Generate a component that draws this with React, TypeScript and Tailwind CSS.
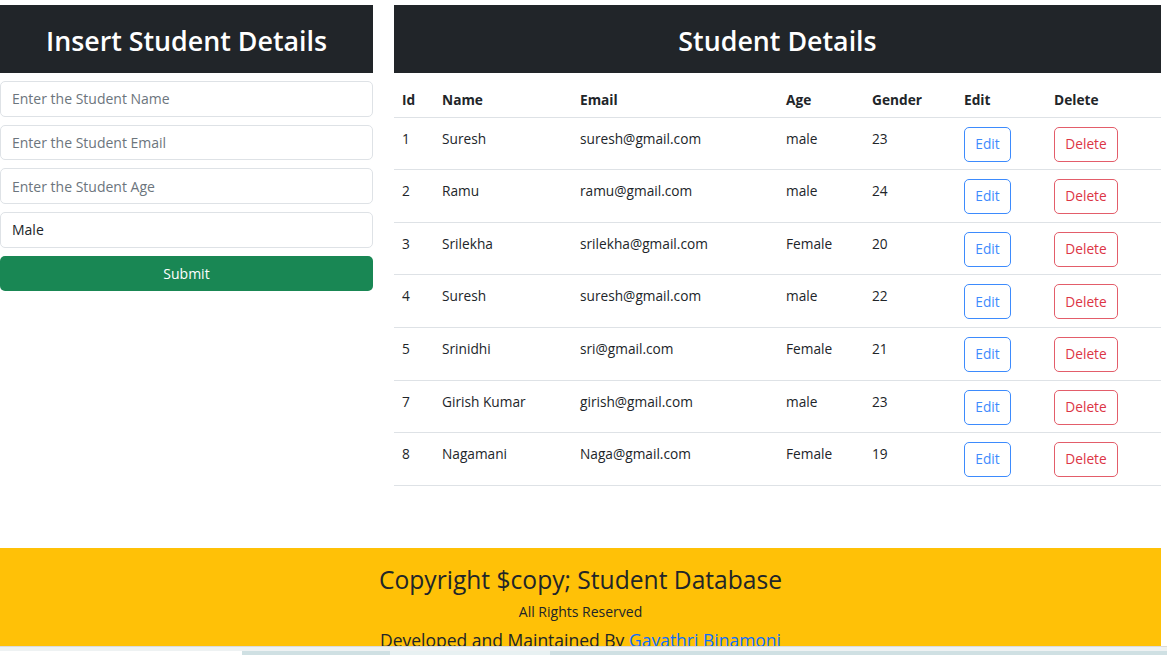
import React from "react";

type Student = {
  id: number;
  name: string;
  email: string;
  age: string;
  gender: string;
};

const students: Student[] = [
  { id: 1, name: "Suresh", email: "suresh@gmail.com", age: "male", gender: "23" },
  { id: 2, name: "Ramu", email: "ramu@gmail.com", age: "male", gender: "24" },
  { id: 3, name: "Srilekha", email: "srilekha@gmail.com", age: "Female", gender: "20" },
  { id: 4, name: "Suresh", email: "suresh@gmail.com", age: "male", gender: "22" },
  { id: 5, name: "Srinidhi", email: "sri@gmail.com", age: "Female", gender: "21" },
  { id: 7, name: "Girish Kumar", email: "girish@gmail.com", age: "male", gender: "23" },
  { id: 8, name: "Nagamani", email: "Naga@gmail.com", age: "Female", gender: "19" },
];

const Field = ({ placeholder, value }: { placeholder: string; value?: string }) => (
  <input
    readOnly
    placeholder={placeholder}
    value={value}
    className="w-full h-[35.5px] border border-[#dee2e6] rounded-[5px] px-[11px] text-[14px] text-[#212529] placeholder:text-[#6c757d] outline-none"
  />
);

const InsertForm = () => {
  return (
    <div className="w-[373px] shrink-0">
      <div className="h-[68px] bg-[#212529] flex items-center justify-center pt-[5px]">
        <h2 className="text-white text-[26.8px] font-semibold">Insert Student Details</h2>
      </div>
      <div className="mt-[8px] flex flex-col gap-[8.2px]">
        <Field placeholder="Enter the Student Name" />
        <Field placeholder="Enter the Student Email" />
        <Field placeholder="Enter the Student Age" />
        <Field placeholder="Gender" value="Male" />
        <button className="w-full h-[35.5px] bg-[#198754] text-white text-[14px] rounded-[5px]">
          Submit
        </button>
      </div>
    </div>
  );
};

const cell = "align-top px-[8px] pt-[10px] leading-[21.6px]";

const StudentTable = () => {
  return (
    <div className="w-[767px] shrink-0">
      <div className="h-[68px] bg-[#212529] flex items-center justify-center pt-[5px]">
        <h2 className="text-white text-[26.8px] font-semibold">Student Details</h2>
      </div>
      <table className="mt-[8px] w-full table-fixed border-collapse text-[13.7px] text-[#212529]">
        <colgroup>
          <col className="w-[40px]" />
          <col className="w-[138px]" />
          <col className="w-[206px]" />
          <col className="w-[86px]" />
          <col className="w-[92px]" />
          <col className="w-[90px]" />
          <col />
        </colgroup>
        <thead>
          <tr className="border-b border-[#dee2e6]">
            {["Id", "Name", "Email", "Age", "Gender", "Edit", "Delete"].map((h) => (
              <th key={h} className="text-left font-bold px-[8px] pt-[8px] pb-[6px] leading-[21.6px]">
                {h}
              </th>
            ))}
          </tr>
        </thead>
        <tbody>
          {students.map((s) => (
            <tr key={s.id} className="border-b border-[#dee2e6] h-[52.6px]">
              <td className={cell}>{s.id}</td>
              <td className={cell}>{s.name}</td>
              <td className={cell}>{s.email}</td>
              <td className={cell}>{s.age}</td>
              <td className={cell}>{s.gender}</td>
              <td className="align-top px-[8px] pt-[9px]">
                <button className="h-[35px] w-[47px] border border-[#3d8bfd] text-[#3d8bfd] rounded-[5px]">
                  Edit
                </button>
              </td>
              <td className="align-top px-[8px] pt-[9px]">
                <button className="h-[35px] w-[64px] border border-[#e35d6a] text-[#dc3545] rounded-[5px]">
                  Delete
                </button>
              </td>
            </tr>
          ))}
        </tbody>
      </table>
    </div>
  );
};

const Footer = () => {
  return (
    <div className="w-[1161px] h-[98px] bg-[#ffc107] overflow-hidden text-center text-[#212529] pt-[17px]">
      <h3 className="text-[24.6px] font-medium leading-[30px]">Copyright $copy; Student Database</h3>
      <h6 className="mt-[8px] text-[14px] font-medium leading-[17px]">All Rights Reserved</h6>
      <h5 className="mt-[9px] text-[17.5px] font-medium leading-[22px]">
        Developed and Maintained By <a className="text-[#0d6efd]">Gayathri Binamoni</a>
      </h5>
    </div>
  );
};

export default function App() {
  return (
    <div className="w-[1167px] h-[655px] overflow-hidden bg-white" style={{ fontFamily: '"Open Sans", "Noto Sans", sans-serif' }}>
      <div className="h-[548px] pt-[5px] flex gap-[21px]">
        <InsertForm />
        <StudentTable />
      </div>
      <Footer />
      {/* browser bottom strip */}
      <div className="h-px bg-[#dcdcdc]" />
      <div className="h-[4px] bg-[#eef2f3]" />
      <div className="h-[4px] flex">
        <div className="w-[242px] bg-white" />
        <div className="w-[148px] bg-[#cfe0e3]" />
        <div className="w-[160px] bg-[#e8f1f2]" />
        <div className="flex-1 bg-[#cfe0e3]" />
      </div>
    </div>
  );
}
